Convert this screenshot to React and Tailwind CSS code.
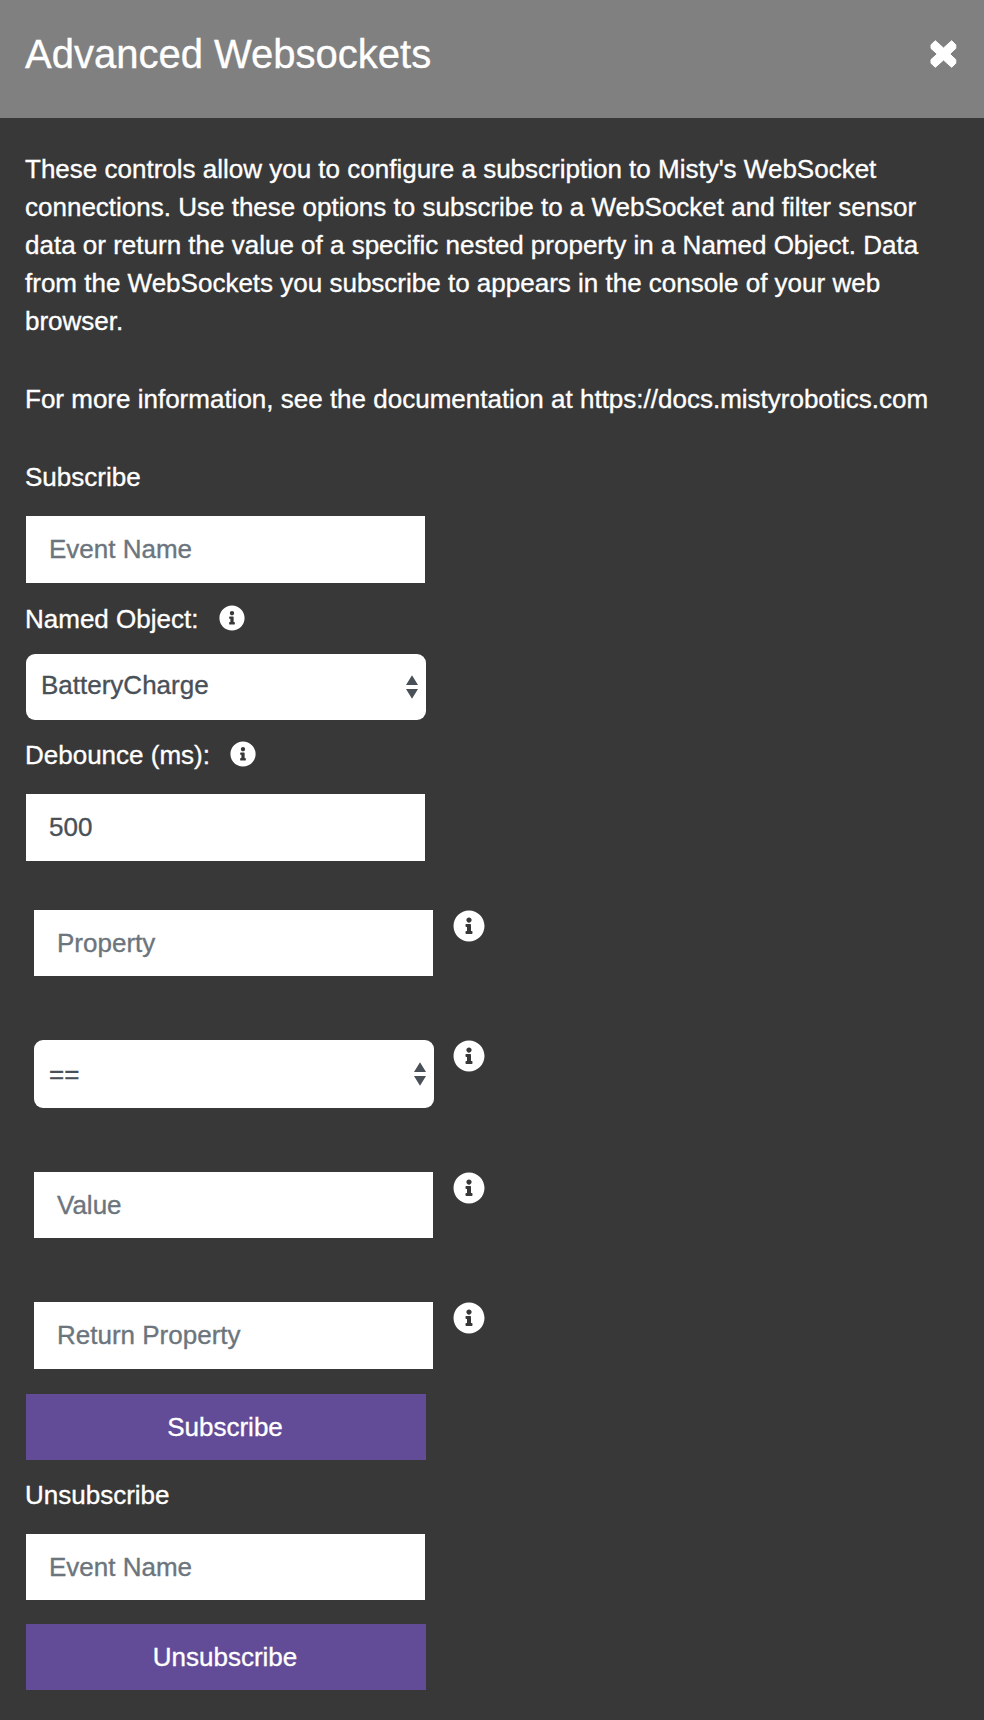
import { FaInfoCircle } from "react-icons/fa";

function Arrows() {
  return (
    <svg viewBox="0 0 12 24" className="h-6 w-3 fill-[#495057]">
      <path d="M6 0.3L12 10H0zM6 23.7L0 14H12z" />
    </svg>
  );
}

function TextField({ className, children }) {
  return <div className={`flex w-[399px] items-center bg-white pl-[23px] ${className}`}>{children}</div>;
}

function SelectField({ className, children }) {
  return (
    <div className={`flex w-[400px] items-center justify-between rounded-[9px] bg-white pr-[8px] pl-[15px] text-[#495057] ${className}`}>
      {children}
      <Arrows />
    </div>
  );
}

function Info() {
  return <FaInfoCircle className="ml-5 size-8 shrink-0" />;
}

function Button({ className, children }) {
  return (
    <button className={`flex h-[66px] w-[400px] items-center justify-center bg-[#624c98] pr-0.5 text-white ${className}`}>
      {children}
    </button>
  );
}

export default function App() {
  return (
    <div className="h-[1720px] w-[984px] overflow-hidden bg-[#383838] font-['Liberation_Sans',Arial,sans-serif] text-[26px] leading-[38px] text-white [-webkit-text-stroke:0.35px_currentColor]">
      <header className="flex h-[118px] items-start justify-between bg-[#808080] pr-[27px] pl-[25px]">
        <h1 className="mt-[30px] text-[40px] leading-[48px]">Advanced Websockets</h1>
        <svg viewBox="0 0 27 28" className="mt-10 h-7 w-[27px] fill-white stroke-white" strokeWidth="1" strokeLinejoin="round">
          <path d="M5.3 0.7L13.5 8L21.7 0.7L25.8 4.8V8.4L19.8 14L25.8 19.6V23.2L21.7 27.3L13.5 20L5.3 27.3L1 23.2V19.6L7.2 14L1 8.4V4.8z" />
        </svg>
      </header>
      <main className="flex flex-col items-start">
        <p className="mt-[32px] ml-[25px] whitespace-nowrap">
          These controls allow you to configure a subscription to Misty's WebSocket<br />
          connections. Use these options to subscribe to a WebSocket and filter sensor<br />
          data or return the value of a specific nested property in a Named Object. Data<br />
          from the WebSockets you subscribe to appears in the console of your web<br />
          browser.
        </p>
        <p className="mt-10 ml-[25px] whitespace-nowrap">
          For more information, see the documentation at https://docs.mistyrobotics.com
        </p>
        <div className="mt-10 ml-[25px]">Subscribe</div>
        <TextField className="mt-[20px] ml-[26px] h-[67px] pb-0.5 text-[#6c757d]">Event Name</TextField>
        <div className="mt-[17px] ml-[25px] flex h-[38px] items-center">
          Named Object:
          <FaInfoCircle className="mb-0.5 ml-[20.5px] size-[26px]" />
        </div>
        <SelectField className="mt-4 ml-[26px] h-[66px]">
          <span className="pb-1">BatteryCharge</span>
        </SelectField>
        <div className="mt-[16px] ml-[25px] flex h-[38px] items-center">
          Debounce (ms):
          <FaInfoCircle className="mb-0.5 ml-5 size-[26px]" />
        </div>
        <TextField className="mt-[20px] ml-[26px] h-[67px] pb-0.5 text-[#495057]">500</TextField>
        <div className="mt-[49px] ml-[34px] flex h-[66px]">
          <TextField className="h-[66px] text-[#6c757d]">Property</TextField>
          <Info />
        </div>
        <div className="mt-16 ml-[34px] flex h-[68px]">
          <SelectField className="-mr-px h-[68px]">==</SelectField>
          <Info />
        </div>
        <div className="mt-16 ml-[34px] flex h-[66px]">
          <TextField className="h-[66px] text-[#6c757d]">Value</TextField>
          <Info />
        </div>
        <div className="mt-16 ml-[34px] flex h-[67px]">
          <TextField className="h-[67px] pb-0.5 text-[#6c757d]">Return Property</TextField>
          <Info />
        </div>
        <Button className="mt-[25px] ml-[26px]">Subscribe</Button>
        <div className="mt-[16px] ml-[25px]">Unsubscribe</div>
        <TextField className="mt-5 ml-[26px] h-[66px] text-[#6c757d]">Event Name</TextField>
        <Button className="mt-6 ml-[26px]">Unsubscribe</Button>
      </main>
    </div>
  );
}
